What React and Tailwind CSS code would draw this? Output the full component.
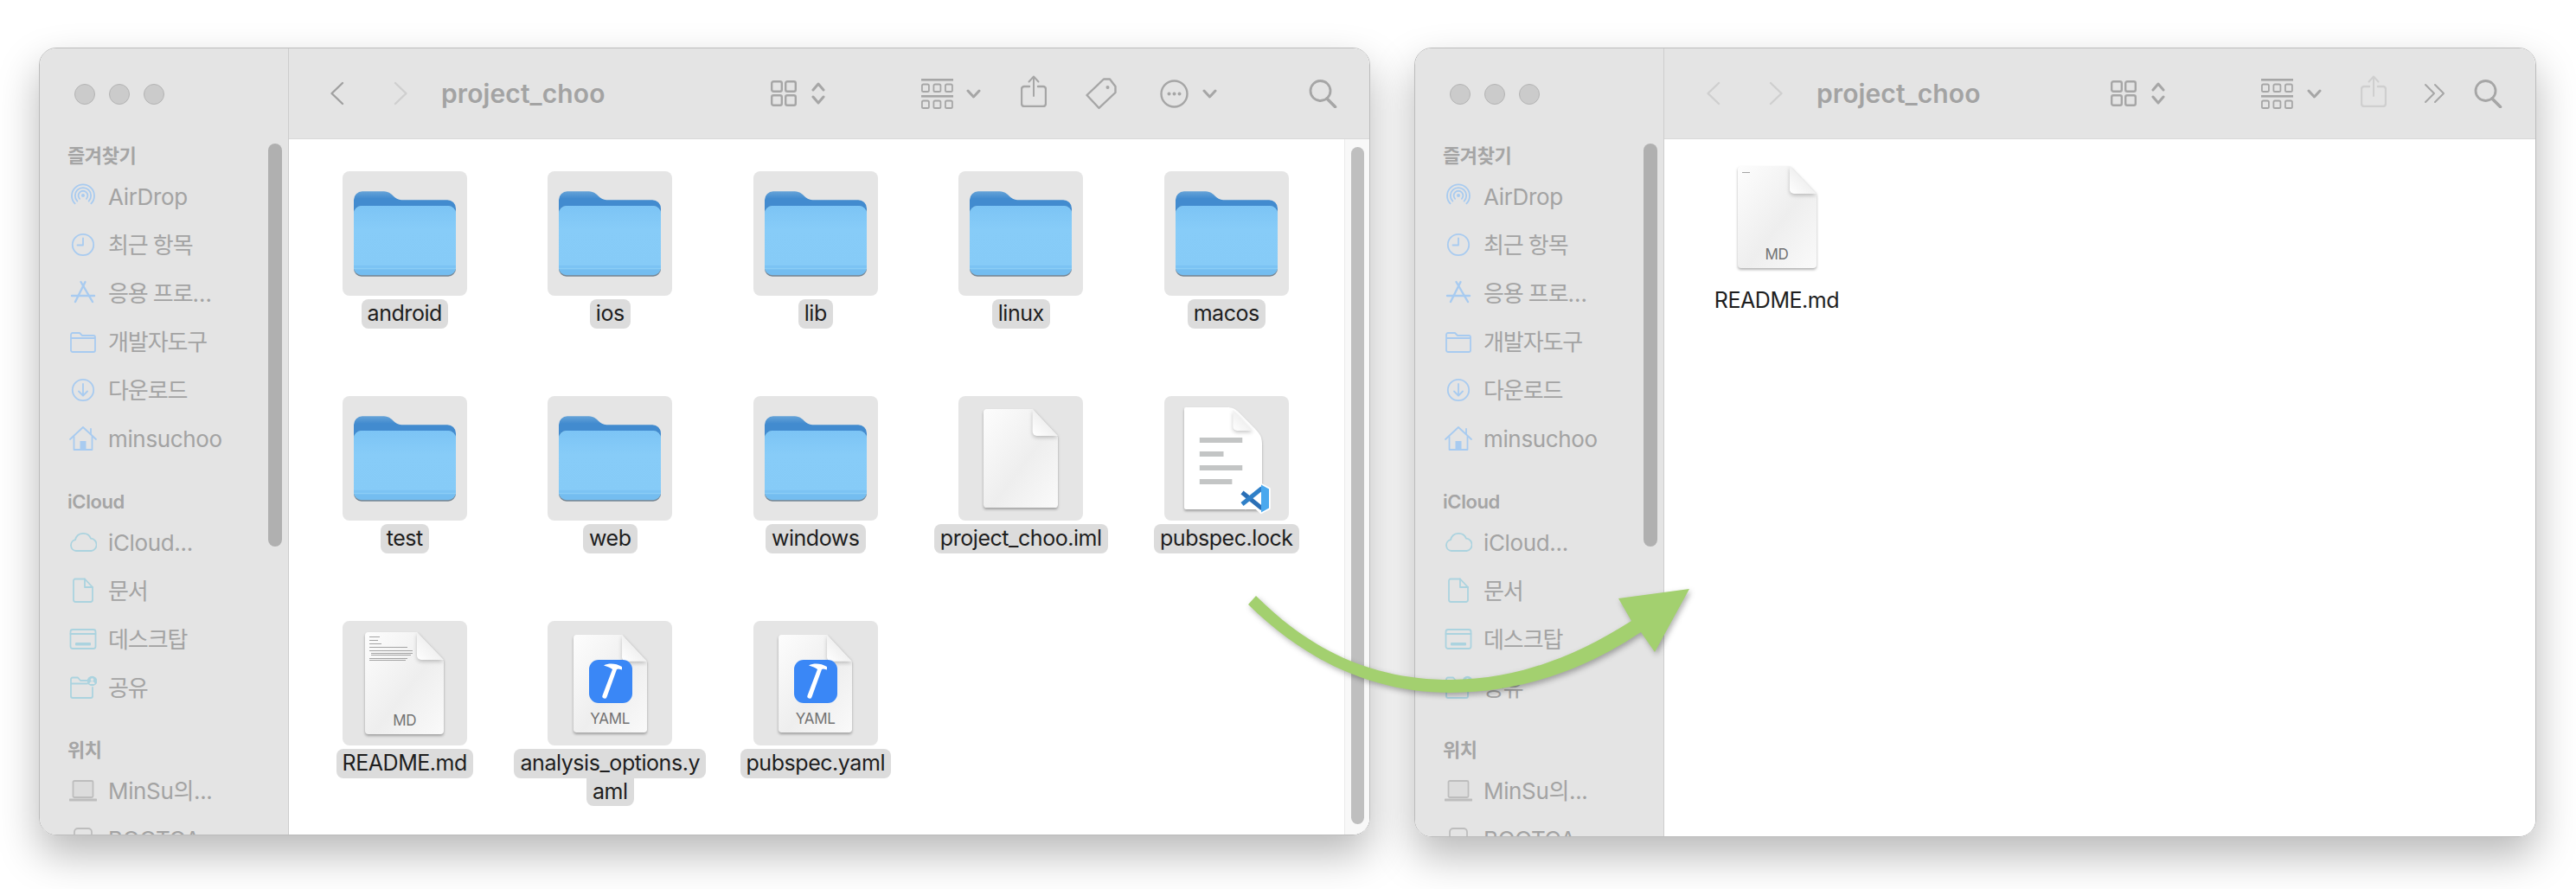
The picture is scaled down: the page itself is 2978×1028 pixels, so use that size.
const FONT = 'font-["Inter","Noto_Sans_CJK_KR",sans-serif]';

function Chevron({ dir = 'left', className }) {
  return (
    <svg viewBox="0 0 17 28" className={`w-[17px] h-[28px] shrink-0 ${className}`} fill="none" stroke="currentColor" strokeWidth="2.4" strokeLinecap="round" strokeLinejoin="round">
      <path d={dir === 'left' ? 'M15 2 L2.5 14 L15 26' : 'M2 2 L14.5 14 L2 26'} />
    </svg>
  );
}

function GridIcon({ className }) {
  return (
    <svg viewBox="0 0 30 30" className={`w-[30px] h-[30px] shrink-0 ${className}`} fill="none" stroke="currentColor" strokeWidth="2.4">
      <rect x="1.2" y="1.2" width="11.6" height="11.6" rx="2" />
      <rect x="17.2" y="1.2" width="11.6" height="11.6" rx="2" />
      <rect x="1.2" y="17.2" width="11.6" height="11.6" rx="2" />
      <rect x="17.2" y="17.2" width="11.6" height="11.6" rx="2" />
    </svg>
  );
}

function UpDown({ className }) {
  return (
    <svg viewBox="0 0 16 26" className={`w-[16px] h-[26px] shrink-0 ${className}`} fill="none" stroke="currentColor" strokeWidth="3" strokeLinecap="round" strokeLinejoin="round">
      <path d="M2 9 L8 2 L14 9" />
      <path d="M2 17 L8 24 L14 17" />
    </svg>
  );
}

function GroupIcon({ className }) {
  return (
    <svg viewBox="0 0 37 35" className={`w-[37px] h-[35px] shrink-0 ${className}`} fill="none" stroke="currentColor" strokeWidth="1.8">
      <rect x="0" y="0" width="37" height="2.6" fill="currentColor" stroke="none" />
      <rect x="0" y="19" width="37" height="2.6" fill="currentColor" stroke="none" />
      {[0.9, 14.4, 27.9].map((x) => (
        <g key={x}>
          <rect x={x} y="6.5" width="8" height="8.5" rx="1.6" />
          <rect x={x} y="25.5" width="8" height="8.5" rx="1.6" />
        </g>
      ))}
    </svg>
  );
}

function SmallChevron({ className }) {
  return (
    <svg viewBox="0 0 17 11" className={`w-[17px] h-[11px] shrink-0 ${className}`} fill="none" stroke="currentColor" strokeWidth="3" strokeLinecap="round" strokeLinejoin="round">
      <path d="M2 2 L8.5 9 L15 2" />
    </svg>
  );
}

function ShareIcon({ className }) {
  return (
    <svg viewBox="0 0 30 37" className={`w-[30px] h-[37px] shrink-0 ${className}`} fill="none" stroke="currentColor" strokeWidth="2.4" strokeLinecap="round" strokeLinejoin="round">
      <path d="M10 13 H4 a3 3 0 0 0 -3 3 V33 a3 3 0 0 0 3 3 H26 a3 3 0 0 0 3 -3 V16 a3 3 0 0 0 -3 -3 H20" />
      <path d="M15 24 V2" strokeWidth="2" />
      <path d="M9.5 7.5 L15 1.5 L20.5 7.5" strokeWidth="2" />
    </svg>
  );
}

function TagIcon({ className }) {
  return (
    <svg viewBox="0 0 36 37" className={`w-[36px] h-[37px] shrink-0 ${className}`} fill="none" stroke="currentColor" strokeWidth="2.4" strokeLinejoin="round">
      <path d="M21 1.5 H28 L34.5 10 V17 L15.5 35 L1.5 20 Z" />
      <circle cx="25.5" cy="11" r="2" fill="currentColor" stroke="none" />
    </svg>
  );
}

function EllipsisIcon({ className }) {
  return (
    <svg viewBox="0 0 33 33" className={`w-[33px] h-[33px] shrink-0 ${className}`} fill="none" stroke="currentColor" strokeWidth="2.4">
      <circle cx="16.5" cy="16.5" r="15" />
      <circle cx="10.5" cy="16.5" r="2" fill="currentColor" stroke="none" />
      <circle cx="16.5" cy="16.5" r="2" fill="currentColor" stroke="none" />
      <circle cx="22.5" cy="16.5" r="2" fill="currentColor" stroke="none" />
    </svg>
  );
}

function SearchIcon({ className }) {
  return (
    <svg viewBox="0 0 33 33" className={`w-[33px] h-[33px] shrink-0 ${className}`} fill="none" stroke="currentColor" strokeWidth="2.8" strokeLinecap="round">
      <circle cx="13.5" cy="13" r="11.5" />
      <path d="M21 22 L30.5 31.5" strokeWidth="3.6" />
    </svg>
  );
}

function DoubleChevron({ className }) {
  return (
    <svg viewBox="0 0 25 24" className={`w-[25px] h-[24px] shrink-0 ${className}`} fill="none" stroke="currentColor" strokeWidth="2" strokeLinecap="round" strokeLinejoin="round">
      <path d="M2 2 L12 12 L2 22" />
      <path d="M13 2 L23 12 L13 22" />
    </svg>
  );
}

// sidebar glyphs, all on a 32x30 box
function SideIcon({ name }) {
  const arc = (r) => {
    const d = r * 0.72;
    return `M${15 - d} ${14 + d} A${r} ${r} 0 1 1 ${15 + d} ${14 + d}`;
  };
  return (
    <svg viewBox="0 0 32 30" className="w-[32px] h-[30px]" fill="none" stroke="currentColor" strokeWidth="1.8" strokeLinecap="round" strokeLinejoin="round">
      {name === 'airdrop' && (
        <g transform="translate(1 0)">
          <path d={arc(13)} />
          <path d={arc(9.2)} />
          <path d={arc(5.4)} />
          <circle cx="15" cy="14" r="2" fill="currentColor" stroke="none" />
        </g>
      )}
      {name === 'clock' && (
        <g>
          <circle cx="16" cy="15" r="12.2" />
          <path d="M16 7.5 V15.5 H9.5" />
        </g>
      )}
      {name === 'apps' && (
        <g strokeWidth="2.4">
          <path d="M13.5 2 L27 25" />
          <path d="M18.5 2 L7 25" />
          <path d="M3 18 H29" />
        </g>
      )}
      {name === 'folder' && (
        <path d="M2 7 a2 2 0 0 1 2 -2 H12 L15 8 H28 a2 2 0 0 1 2 2 V25 a2 2 0 0 1 -2 2 H4 a2 2 0 0 1 -2 -2 Z M2 11 H30" />
      )}
      {name === 'download' && (
        <g>
          <circle cx="16" cy="15" r="12.2" />
          <path d="M16 8 V21 M11 16.5 L16 21.5 L21 16.5" />
        </g>
      )}
      {name === 'home' && (
        <g>
          <path d="M1 16 L16 2 L31 16" />
          <path d="M25 10 V4" />
          <path d="M5.5 13 V28 H26.5 V13" />
          <rect x="12.5" y="18" width="7" height="10" fill="currentColor" stroke="none" />
        </g>
      )}
      {name === 'cloud' && (
        <path d="M8 25 a6.5 6.5 0 0 1 -1 -12.8 a9.5 9.5 0 0 1 18 -1.5 a7.2 7.2 0 0 1 0.5 14.3 Z" />
      )}
      {name === 'doc' && (
        <g>
          <path d="M7 1.5 H18 L27 11 V25.5 a2.5 2.5 0 0 1 -2.5 2.5 H7.5 a2.5 2.5 0 0 1 -2.5 -2.5 V3.5 a2 2 0 0 1 2 -2 Z" />
          <path d="M18 1.5 V11 H27" />
        </g>
      )}
      {name === 'desktop' && (
        <g>
          <rect x="1.5" y="4" width="29" height="22" rx="2.5" />
          <path d="M1.5 9 H30.5" />
          <rect x="7" y="19" width="18" height="3.6" rx="1" fill="currentColor" stroke="none" />
        </g>
      )}
      {name === 'shared' && (
        <g>
          <path d="M21 7 H13 L10 3.5 H4 a2 2 0 0 0 -2 2 V25 a2 2 0 0 0 2 2 H25 a2 2 0 0 0 2 -2 V15 M2 10.5 H21" />
          <circle cx="26.5" cy="7.5" r="5.8" fill="currentColor" stroke="none" />
          <circle cx="26.5" cy="6" r="1.8" fill="#e4e4e4" stroke="none" />
          <path d="M23.5 11 a3 3 0 0 1 6 0 Z" fill="#e4e4e4" stroke="none" />
        </g>
      )}
      {name === 'laptop' && (
        <g>
          <rect x="4.5" y="4" width="23" height="19" rx="1.5" fill="#dcdcdc" />
          <path d="M0.8 26 H31.2" strokeWidth="3" />
        </g>
      )}
      {name === 'disk' && (
        <rect x="6" y="3" width="20" height="24" rx="4" />
      )}
    </svg>
  );
}

function SideRow({ icon, label, tone, ko }) {
  return (
    <div className="flex items-center h-14 shrink-0">
      <div className={`w-[53px] pl-[8px] flex ${tone}`}>
        <SideIcon name={icon} />
      </div>
      <span className={`text-[26px] text-[#a3a3a3] whitespace-nowrap ${ko ? 'tracking-[-1.1px]' : 'tracking-[-0.35px]'}`}>{label}</span>
    </div>
  );
}

function SideHeader({ children, first }) {
  return (
    <div className={`h-[38px] shrink-0 flex items-center pl-[6px] text-[22px] font-semibold tracking-[-0.4px] text-[#a5a5a5] ${first ? '' : 'mt-[26px]'}`}>
      {children}
    </div>
  );
}

function Sidebar() {
  const blue = 'text-[#a8cbf0]';
  const teal = 'text-[#abd3df]';
  const gray = 'text-[#bdbdbd]';
  return (
    <div className="relative w-[288px] shrink-0 bg-[#e4e4e4] border-r border-[#cdcdcd] flex flex-col overflow-hidden">
      <div className="h-[105px] shrink-0 flex items-center gap-4 pl-[40px]">
        <div className="w-6 h-6 rounded-full bg-[#cbcbcb] border border-[#b4b4b4]" />
        <div className="w-6 h-6 rounded-full bg-[#cbcbcb] border border-[#b4b4b4]" />
        <div className="w-6 h-6 rounded-full bg-[#cbcbcb] border border-[#b4b4b4]" />
      </div>
      <div className="flex flex-col pl-[26px]">
        <SideHeader first>즐겨찾기</SideHeader>
        <SideRow icon="airdrop" label="AirDrop" tone={blue} />
        <SideRow icon="clock" label="최근 항목" tone={blue} ko />
        <SideRow icon="apps" label="응용 프로…" tone={blue} ko />
        <SideRow icon="folder" label="개발자도구" tone={blue} ko />
        <SideRow icon="download" label="다운로드" tone={blue} ko />
        <SideRow icon="home" label="minsuchoo" tone={blue} />
        <SideHeader>iCloud</SideHeader>
        <SideRow icon="cloud" label="iCloud..." tone={teal} />
        <SideRow icon="doc" label="문서" tone={teal} ko />
        <SideRow icon="desktop" label="데스크탑" tone={teal} ko />
        <SideRow icon="shared" label="공유" tone={teal} ko />
        <div className="-mt-px">
          <SideHeader>위치</SideHeader>
        </div>
        <SideRow icon="laptop" label="MinSu의..." tone={gray} />
        <SideRow icon="disk" label="BOOTCA" tone={gray} />
      </div>
      <div className="absolute left-[264px] top-[110px] w-4 h-[466px] rounded-full bg-[#b0b0b0]" />
    </div>
  );
}

function Title({ className }) {
  return <div className={`w-[190px] shrink-0 text-[30px] leading-none font-semibold tracking-[0.1px] text-[#a3a3a3] ${className}`}>project_choo</div>;
}

function FolderIcon() {
  return (
    <svg viewBox="0 0 120 100" className="w-[118px] h-[99px]">
      <defs>
        <linearGradient id="folderBack" x1="0" y1="0" x2="0" y2="1">
          <stop offset="0" stopColor="#65a3d8" />
          <stop offset="0.17" stopColor="#428bcf" />
          <stop offset="1" stopColor="#428bcf" />
        </linearGradient>
        <linearGradient id="folderFront" x1="0" y1="0" x2="0" y2="1">
          <stop offset="0" stopColor="#7cc4f5" />
          <stop offset="0.4" stopColor="#87ccf8" />
          <stop offset="1" stopColor="#86cbf7" />
        </linearGradient>
      </defs>
      <path d="M0 10 a10 10 0 0 1 10 -10 H33 c7 0 10 2 13 5 c3 3 6 5 10 5 H110 a10 10 0 0 1 10 10 V50 H0 Z" fill="url(#folderBack)" />
      <rect x="0" y="17" width="120" height="83" rx="9" fill="#75838f" />
      <rect x="0" y="17" width="120" height="81.5" rx="9" fill="#74bdf0" />
      <path d="M0 26 a9 9 0 0 1 9 -9 H111 a9 9 0 0 1 9 9 V87 H0 Z" fill="url(#folderFront)" />
      <rect x="0" y="87" width="120" height="3" fill="#7cc3f3" />
      <rect x="0" y="90" width="120" height="1.5" fill="#8bcdf6" />
    </svg>
  );
}

function DocIcon({ w = 91, h = 118, lines, tiny, label, rounded, children }) {
  return (
    <div className="relative shrink-0" style={{ width: w, height: h }}>
      <svg viewBox="0 0 91 118" preserveAspectRatio="none" className="w-full h-full overflow-visible drop-shadow-[0_2px_1.5px_rgba(0,0,0,0.3)]">
        <defs>
          <linearGradient id="docBody" x1="0" y1="0" x2="1" y2="1">
            <stop offset="0" stopColor="#fdfdfd" />
            <stop offset="0.55" stopColor="#eeeeee" />
            <stop offset="1" stopColor="#fafafa" />
          </linearGradient>
          <linearGradient id="docFold" x1="0" y1="1" x2="1" y2="0">
            <stop offset="0" stopColor="#ffffff" />
            <stop offset="1" stopColor="#e2e2e2" />
          </linearGradient>
        </defs>
        <path
          d={rounded
            ? 'M0 2 a2 2 0 0 1 2 -2 H50 c6 0 10 2 14 6 L82 24 c6 6 9 10 9 18 V116 a2 2 0 0 1 -2 2 H2 a2 2 0 0 1 -2 -2 Z'
            : 'M0 4 a4 4 0 0 1 4 -4 H60 L91 33 V114 a4 4 0 0 1 -4 4 H4 a4 4 0 0 1 -4 -4 Z'}
          fill={rounded ? '#ffffff' : 'url(#docBody)'}
        />
        {tiny && tiny.map((t, i) => <rect key={i} x={t[0]} y={t[1]} width={t[2]} height="0.9" fill="#9a9a9a" />)}
        {lines && lines.map((l, i) => <rect key={i} x="18" y={35 + i * 16} width={l} height="6" fill="#c3c5c5" />)}
        <path
          d={rounded ? 'M57 3 V22 a5 5 0 0 0 5 5 H80 Z' : 'M60 0 V27 a5 5 0 0 0 5 5 H91 Z'}
          fill="url(#docFold)"
          className="drop-shadow-[0_2px_2px_rgba(0,0,0,0.22)]"
        />
      </svg>
      {children}
      {label && (
        <div className="absolute left-0 right-0 bottom-[6px] text-center text-[17px] leading-5 tracking-[-0.3px] text-[#727272]">{label}</div>
      )}
    </div>
  );
}

function HammerBadge() {
  return (
    <div className="absolute left-[18px] top-[29px] w-[50px] h-[50px] rounded-[11px] bg-[#3a87f6]">
      <svg viewBox="0 0 50 50" className="w-full h-full" fill="#fff">
        <path d="M17 6.5 C23 3.5 31 4 38 8 L38 11.5 L34 10.5 L32 11 L20.5 43 a2.6 2.6 0 0 1 -5 -1.8 L27 11 C25 9 21 8 17 6.5 Z" />
      </svg>
    </div>
  );
}

function VsBadge() {
  return (
    <svg viewBox="0 0 36 37" className="absolute left-[64px] top-[87px] w-9 h-[37px]">
      <path d="M25 2 L34.5 7 V30 L25 35 L14 25 L7 30 L1 25 L7 18.5 L1 12 L7 7 L14 12 Z" fill="#fff" stroke="#fff" strokeWidth="2.5" strokeLinejoin="round" />
      <path d="M3 11.5 L26 30" stroke="#2a6fb6" strokeWidth="5" fill="none" />
      <path d="M26 6.5 L3 25" stroke="#3080c8" strokeWidth="5" fill="none" />
      <path d="M25 2.5 L34 7.5 V29.5 L25 34.5 Z" fill="#49a8ee" />
    </svg>
  );
}

const README_LINES = [[5, 5, 12], [5, 9, 10], [5, 13, 14], [5, 17, 44], [5, 21, 50], [7, 24, 48], [7, 26, 46], [5, 30, 44], [5, 32, 42]];

function Tile({ children, name, name2 }) {
  return (
    <div className="flex flex-col items-center">
      <div className="w-[144px] h-[144px] rounded-lg bg-[#e5e5e5] flex items-center justify-center">{children}</div>
      <div className="mt-1 h-[34px] px-[7px] rounded-lg bg-[#dcdcdc] flex items-center text-[25px] tracking-[-0.45px] text-[#1e1e1e] whitespace-nowrap">{name}</div>
      {name2 && (
        <div className="h-[32px] px-[7px] rounded-b-lg bg-[#dcdcdc] flex items-center text-[25px] tracking-[-0.45px] text-[#1e1e1e]">{name2}</div>
      )}
    </div>
  );
}

function Arrow() {
  return (
    <svg viewBox="0 0 2978 1028" className="absolute left-0 top-0 w-[2978px] h-[1028px] pointer-events-none drop-shadow-[2px_3px_3px_rgba(0,0,0,0.3)]">
      <path
        d="M1452 689 C1525 762 1600 786 1677 786 C1755 786 1825 757 1886 718 L1871 692 L1953 681 L1913 754 L1897 731 C1830 776 1755 801 1677 801 C1595 801 1515 770 1443 699 Z"
        fill="#a3d06f"
      />
    </svg>
  );
}

const active = 'text-[#a6a6a6]';
const faint = 'text-[#cfcfcf]';

export default function App() {
  return (
    <div className={`relative w-[2978px] h-[1028px] bg-white overflow-hidden ${FONT}`}>
      <div className="flex items-start gap-[51px] pl-[45px] pt-[55px]">
        {/* left finder window */}
        <div className="flex w-[1539px] h-[911px] rounded-[20px] overflow-hidden border border-[#bcbcbc] shadow-[0_22px_48px_rgba(0,0,0,0.28)]">
          <Sidebar />
          <div className="flex-1 flex flex-col min-w-0 bg-white">
            <div className="h-[105px] shrink-0 bg-[#e4e4e4] border-b border-[#d9d9d9] flex items-center">
              <Chevron className="ml-[47px] text-[#a0a0a0]" />
              <Chevron dir="right" className={`ml-[57px] ${faint}`} />
              <Title className="ml-[38px]" />
              <GridIcon className={`ml-[191px] ${active}`} />
              <UpDown className={`ml-[17px] ${active}`} />
              <GroupIcon className={`ml-[111px] ${active}`} />
              <SmallChevron className={`ml-[15px] ${active}`} />
              <ShareIcon className={`ml-[46px] mb-[6px] ${active}`} />
              <TagIcon className={`ml-[45px] ${active}`} />
              <EllipsisIcon className={`ml-[50px] ${active}`} />
              <SmallChevron className={`ml-[16px] ${active}`} />
              <SearchIcon className={`ml-[106px] ${active}`} />
            </div>
            <div className="flex-1 flex min-h-0">
              <div className="flex-1 pl-[15px] pt-[37px]">
                <div className="grid grid-cols-[repeat(5,237.5px)] auto-rows-[260px]">
                  <Tile name="android"><FolderIcon /></Tile>
                  <Tile name="ios"><FolderIcon /></Tile>
                  <Tile name="lib"><FolderIcon /></Tile>
                  <Tile name="linux"><FolderIcon /></Tile>
                  <Tile name="macos"><FolderIcon /></Tile>
                  <Tile name="test"><FolderIcon /></Tile>
                  <Tile name="web"><FolderIcon /></Tile>
                  <Tile name="windows"><FolderIcon /></Tile>
                  <Tile name="project_choo.iml"><DocIcon w={86} h={114} /></Tile>
                  <Tile name="pubspec.lock">
                    <div className="ml-[-8px]">
                      <DocIcon w={90} h={118} rounded lines={[50, 28, 50, 38]}><VsBadge /></DocIcon>
                    </div>
                  </Tile>
                  <Tile name="README.md"><DocIcon tiny={README_LINES} label="MD" /></Tile>
                  <Tile name="analysis_options.y" name2="aml"><DocIcon w={85} h={113} label="YAML"><HammerBadge /></DocIcon></Tile>
                  <Tile name="pubspec.yaml"><DocIcon w={85} h={113} label="YAML"><HammerBadge /></DocIcon></Tile>
                </div>
              </div>
              <div className="w-[29px] shrink-0 bg-[#f8f8f8] border-l border-[#ebebeb] pl-[7px] pt-[9px] pb-[12px]">
                <div className="w-[15px] h-full rounded-full bg-[#bfbfbf]" />
              </div>
            </div>
          </div>
        </div>

        {/* right finder window */}
        <div className="flex w-[1297px] h-[913px] rounded-[20px] overflow-hidden border border-[#bcbcbc] shadow-[0_22px_48px_rgba(0,0,0,0.28)]">
          <Sidebar />
          <div className="flex-1 flex flex-col min-w-0 bg-white">
            <div className="h-[105px] shrink-0 bg-[#e4e4e4] border-b border-[#d9d9d9] flex items-center">
              <Chevron className={`ml-[48px] ${faint}`} />
              <Chevron dir="right" className={`ml-[56px] ${faint}`} />
              <Title className="ml-[38px]" />
              <GridIcon className={`ml-[150px] ${active}`} />
              <UpDown className={`ml-[17px] ${active}`} />
              <GroupIcon className={`ml-[111px] ${active}`} />
              <SmallChevron className={`ml-[16px] ${active}`} />
              <ShareIcon className={`ml-[45px] mb-[6px] ${faint}`} />
              <DoubleChevron className={`ml-[43px] ${active}`} />
              <SearchIcon className={`ml-[33px] ${active}`} />
            </div>
            <div className="flex-1 pl-[45px] pt-[31px]">
              <div className="flex flex-col items-center w-[170px]">
                <DocIcon tiny={[[5, 7, 9]]} label="MD" />
                <div className="mt-[20px] text-[25px] leading-[34px] tracking-[-0.45px] text-[#1e1e1e] whitespace-nowrap">README.md</div>
              </div>
            </div>
          </div>
        </div>
      </div>
      <Arrow />
    </div>
  );
}
